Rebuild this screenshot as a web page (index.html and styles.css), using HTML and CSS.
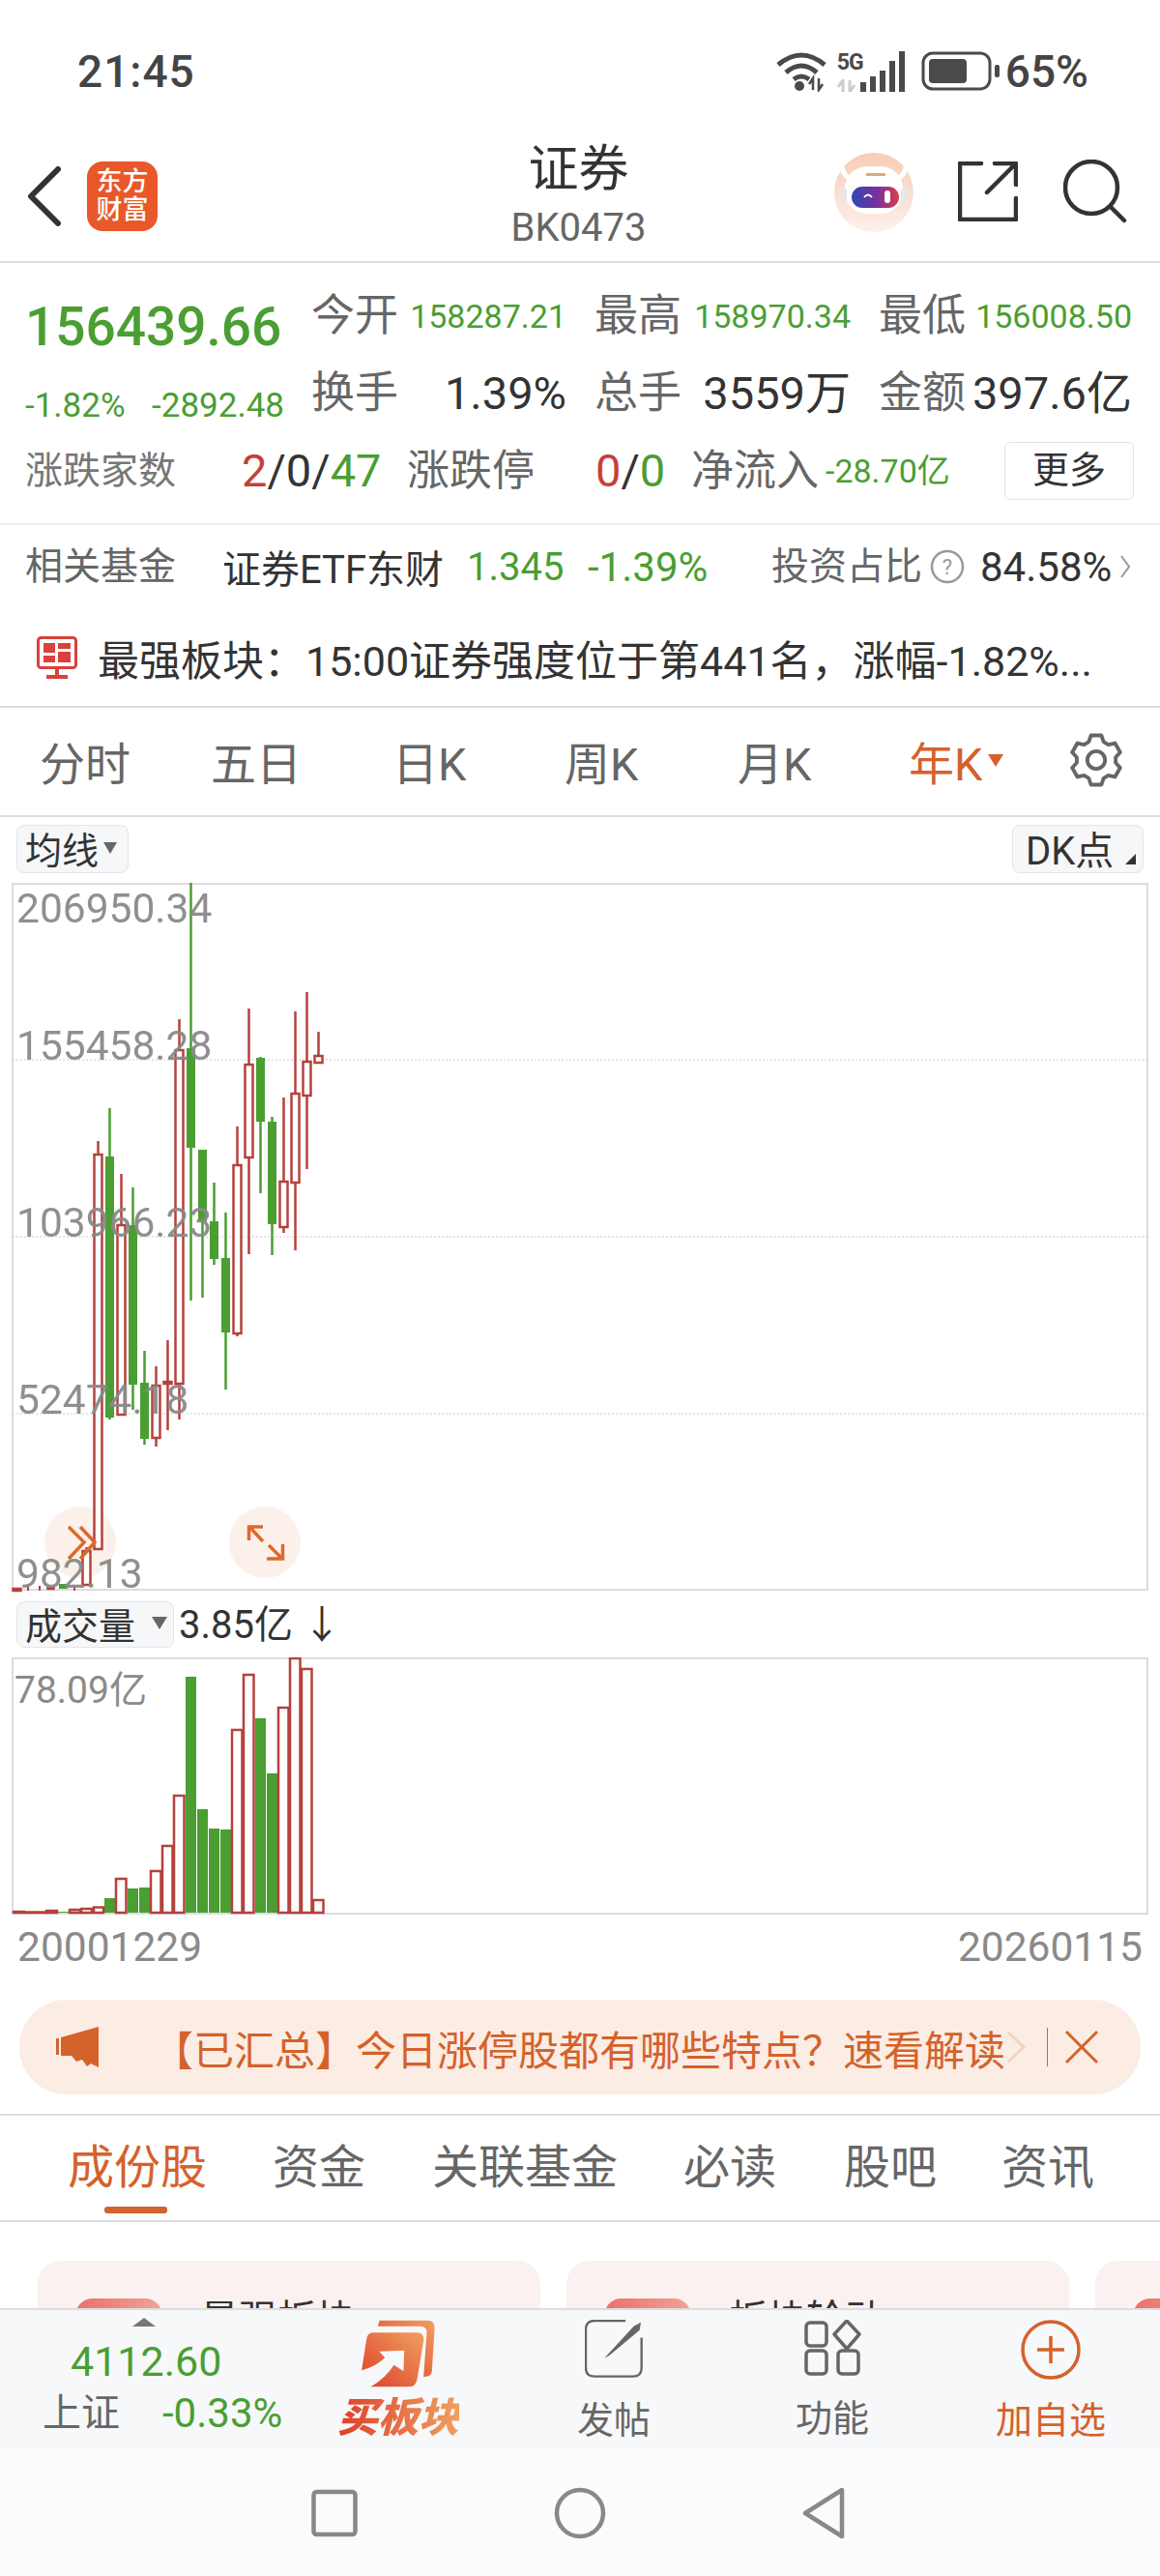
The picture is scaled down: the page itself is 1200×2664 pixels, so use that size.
FILE: index.html
```html
<!DOCTYPE html>
<html>
<head>
<meta charset="utf-8"/>
<title>证券 BK0473</title>
<link rel="stylesheet" href="styles.css">
</head>
<body>
<div class="status">
  <span class="clock">21:45</span>
  <div class="status-right">
    <svg class="wifi" width="52" height="42" viewBox="0 0 52 42"><path d="M2 14Q26 -6 50 14M10 22Q26 8 42 22M18 29Q26 23 34 29" fill="none" stroke="#4a4a4a" stroke-width="5"/><circle cx="24" cy="36" r="5" fill="#4a4a4a"/><path d="M38 40V28l-4 6M44 28V40l4-6" fill="none" stroke="#4a4a4a" stroke-width="2.5"/></svg>
    <div class="net"><span class="net-5g">5G</span><svg width="24" height="13" viewBox="0 0 24 13"><path d="M6 13V1l-5 7M13 1V13l5-7" fill="none" stroke="#ccc" stroke-width="3"/></svg></div>
    <svg class="bars" width="46" height="42" viewBox="0 0 46 42"><path d="M3 42V32M13 42V26M23 42V20M33 42V10M43 42V0" stroke="#4a4a4a" stroke-width="6" fill="none"/></svg>
    <svg class="batt" width="82" height="42" viewBox="0 0 82 42"><rect x="2" y="2" width="69" height="37" rx="10" fill="none" stroke="#4a4a4a" stroke-width="3"/><rect x="8" y="8" width="39" height="25" rx="4" fill="#4a4a4a"/><rect x="76" y="14" width="5" height="13" rx="2" fill="#4a4a4a"/></svg>
    <span class="pct">65%</span>
  </div>
</div>

<div class="topbar">
  <div class="top-left">
    <svg width="36" height="62" viewBox="0 0 36 62"><path d="M32 3L4 31l28 28" fill="none" stroke="#333" stroke-width="6" stroke-linecap="round" stroke-linejoin="round"/></svg>
    <div class="logo"><span>东方</span><span>财富</span></div>
  </div>
  <div class="title">
    <div class="title-name">证券</div>
    <div class="title-code">BK0473</div>
  </div>
  <div class="top-right">
    <svg width="82" height="82" viewBox="0 0 82 82">
      <defs>
        <linearGradient id="peach" x1="0" y1="0" x2="0" y2="1"><stop offset="0" stop-color="#f6cdb4"/><stop offset="1" stop-color="#fdf1ec"/></linearGradient>
        <linearGradient id="visor" x1="0" y1="0" x2="1" y2="0"><stop offset="0" stop-color="#2f49b8"/><stop offset=".55" stop-color="#7a2f9c"/><stop offset="1" stop-color="#d8404a"/></linearGradient>
      </defs>
      <circle cx="41" cy="41" r="41" fill="url(#peach)"/>
      <path d="M8 15q2 10 10 12M74 15q-2 10-10 12" stroke="#fff" stroke-width="5" fill="none"/>
      <rect x="11" y="14" width="60" height="49" rx="23" fill="#fff"/>
      <rect x="5" y="36" width="8" height="16" rx="4" fill="#e9e7e6"/>
      <rect x="69" y="36" width="8" height="16" rx="4" fill="#e9e7e6"/>
      <rect x="33" y="21" width="20" height="3" fill="#e2a677"/>
      <rect x="18" y="35" width="49" height="22" rx="11" fill="url(#visor)"/>
      <path d="M31 46q4-5 8 0" stroke="#fff" stroke-width="2" fill="none"/>
      <rect x="52" y="39" width="6" height="13" rx="3" fill="#fff"/>
    </svg>
    <svg width="62" height="62" viewBox="0 0 62 62"><path d="M24 2H2V60H60V38M60 2L30 32M38 2H60V24" fill="none" stroke="#333" stroke-width="4.5" stroke-linecap="round" stroke-linejoin="round"/></svg>
    <svg width="66" height="66" viewBox="0 0 66 66"><circle cx="29" cy="29" r="27" fill="none" stroke="#333" stroke-width="4.5"/><path d="M49 49L63 63" stroke="#333" stroke-width="4.5" stroke-linecap="round"/></svg>
  </div>
</div>

<div class="quote">
  <div class="quote-grid">
    <div class="price">156439.66</div>
    <div class="stat"><span class="lbl">今开</span><span class="num green">158287.21</span></div>
    <div class="stat"><span class="lbl">最高</span><span class="num green">158970.34</span></div>
    <div class="stat"><span class="lbl">最低</span><span class="num green">156008.50</span></div>
    <div class="change"><span>-1.82%</span><span>-2892.48</span></div>
    <div class="stat"><span class="lbl">换手</span><span class="val">1.39%</span></div>
    <div class="stat"><span class="lbl">总手</span><span class="val">3559万</span></div>
    <div class="stat"><span class="lbl">金额</span><span class="val">397.6亿</span></div>
  </div>
  <div class="breadth">
    <span class="lbl-sm">涨跌家数</span>
    <span class="val"><span class="red">2</span>/0/<span class="green">47</span></span>
    <span class="lbl">涨跌停</span>
    <span class="val"><span class="red">0</span>/<span class="green">0</span></span>
    <span class="lbl">净流入</span>
    <span class="num green">-28.70亿</span>
    <span class="more">更多</span>
  </div>
</div>

<div class="fund">
  <span class="lbl-sm">相关基金</span>
  <span class="fund-name">证券ETF东财</span>
  <span class="fund-num green">1.345</span>
  <span class="fund-num green">-1.39%</span>
  <span class="lbl-sm">投资占比</span>
  <svg width="36" height="36" viewBox="0 0 36 36"><circle cx="18" cy="18" r="16" fill="none" stroke="#999" stroke-width="2.5"/><text x="18" y="26" font-size="22" text-anchor="middle" fill="#999">?</text></svg>
  <span class="fund-pct">84.58%</span>
  <svg width="12" height="26" viewBox="0 0 12 26"><path d="M2 2l8 11-8 11" fill="none" stroke="#999" stroke-width="2"/></svg>
</div>

<div class="notice">
  <svg width="42" height="44" viewBox="0 0 42 44"><rect x="1.5" y="1.5" width="39" height="31" rx="3" fill="none" stroke="#d9413b" stroke-width="3"/><path d="M7 7h12v10H7zM22 7h13v6H22zM7 20h12v7H7zM22 16h13v11H22z" fill="#d9413b"/><path d="M21 33v7M10 42h22" stroke="#d9413b" stroke-width="4"/></svg>
  <span>最强板块：15:00证券强度位于第441名，涨幅-1.82%...</span>
</div>

<div class="ktabs">
  <span>分时</span>
  <span>五日</span>
  <span>日K</span>
  <span>周K</span>
  <span>月K</span>
  <span class="ktab-on">年K<i class="caret-on"></i></span>
  <svg width="56" height="58" viewBox="-29 -30 58 60"><path d="M-5.6 -26.4L5.6 -26.4L7.9 -19.5L12.9 -16.5L20.1 -18.1L25.7 -8.3L20.8 -2.9L20.8 2.9L25.7 8.3L20.1 18.1L12.9 16.5L7.9 19.5L5.6 26.4L-5.6 26.4L-7.9 19.5L-12.9 16.5L-20.1 18.1L-25.7 8.3L-20.8 2.9L-20.8 -2.9L-25.7 -8.3L-20.1 -18.1L-12.9 -16.5L-7.9 -19.5Z" fill="none" stroke="#666" stroke-width="4" stroke-linejoin="round"/><circle r="9.5" fill="none" stroke="#666" stroke-width="4"/></svg>
</div>

<div class="tools">
  <span class="pill pill-ma">均线<i class="caret"></i></span>
  <span class="pill pill-dk">DK点<i class="corner"></i></span>
</div>

<svg class="kchart" width="1200" height="732" viewBox="0 913 1200 732">
  <path class="frame" d="M13 1644V914H1187V1644H13"/>
  <path class="dots" d="M13 1096H1187M13 1279H1187M13 1462H1187"/>
  <circle class="bubble" cx="83" cy="1595" r="37"/>
  <circle class="bubble" cx="274" cy="1595" r="37"/>
  <path class="wick-g" d="M113.500 1146V1468M137.500 1228V1458M149.500 1397V1494M197.500 913V1345M209.500 1189V1342M221.500 1223V1308M233.500 1254V1437M269.500 1093V1234M281.500 1155V1298"/>
  <path class="wick-r" d="M101.500 1180V1602M125.500 1214V1463M161.500 1413V1496M173.500 1386V1479M185.500 1054V1468M245.500 1165V1382M257.500 1043V1297M293.500 1135V1275M305.500 1046V1293M317.500 1026V1209M329.500 1067V1099M89.500 1600V1639"/>
  <g class="body-g">
    <rect x="109" y="1196" width="9" height="270"/>
    <rect x="133" y="1267" width="9" height="165"/>
    <rect x="145" y="1430" width="9" height="58"/>
    <rect x="193" y="1084" width="9" height="103"/>
    <rect x="205" y="1189" width="9" height="74"/>
    <rect x="217" y="1263" width="9" height="39"/>
    <rect x="229" y="1301" width="9" height="77"/>
    <rect x="265" y="1094" width="9" height="66"/>
    <rect x="277" y="1160" width="9" height="106"/>
    <rect x="61" y="1638" width="9" height="5"/>
  </g>
  <g class="body-r">
    <rect x="97.500" y="1194" width="8" height="408"/>
    <rect x="121.500" y="1267" width="8" height="196"/>
    <rect x="157.500" y="1433" width="8" height="54"/>
    <rect x="169.500" y="1429" width="8" height="2"/>
    <rect x="181.500" y="1086" width="8" height="345"/>
    <rect x="241.500" y="1205" width="8" height="174"/>
    <rect x="253.500" y="1101" width="8" height="96"/>
    <rect x="289.500" y="1222" width="8" height="47"/>
    <rect x="301.500" y="1131" width="8" height="92"/>
    <rect x="313.500" y="1098" width="8" height="35"/>
    <rect x="325.500" y="1092" width="8" height="7"/>
    <rect x="85.500" y="1604" width="8" height="35"/>
    <rect x="13.500" y="1643" width="8" height="2"/>
    <rect x="49.500" y="1642" width="6" height="1"/>
  </g>
  <path class="tiny" d="M29 1641V1645M41 1640V1645M77 1641V1645"/>
  <path class="ctrl" d="M71 1579L87 1595 71 1612M83 1579L98 1595 83 1612"/>
  <path class="ctrl" d="M257.500 1593V1579H272M259 1580L272 1594M292.500 1597V1612H276M291 1611L278 1598"/>
  <g class="axis">
    <text x="17" y="954">206950.34</text>
    <text x="17" y="1096">155458.28</text>
    <text x="17" y="1279">103966.23</text>
    <text x="17" y="1462">52474.18</text>
    <text x="17" y="1642">982.13</text>
  </g>
</svg>

<div class="vol-tools">
  <span class="pill pill-vol">成交量<i class="caret"></i></span>
  <span class="vol-now">3.85亿 ↓</span>
</div>

<svg class="vchart" width="1200" height="266" viewBox="0 1714 1200 266">
  <path class="frame" d="M13 1979V1715H1187V1979H13"/>
  <g class="body-g">
    <rect x="108" y="1963" width="11" height="15"/>
    <rect x="132" y="1953" width="11" height="25"/>
    <rect x="144" y="1952" width="11" height="26"/>
    <rect x="192" y="1734" width="11" height="244"/>
    <rect x="204" y="1871" width="11" height="107"/>
    <rect x="216" y="1891" width="11" height="87"/>
    <rect x="228" y="1892" width="11" height="86"/>
    <rect x="264" y="1777" width="11" height="201"/>
    <rect x="276" y="1834" width="11" height="144"/>
    <rect x="60" y="1977" width="11" height="1"/>
  </g>
  <g class="body-r">
    <rect x="120" y="1943" width="10.500" height="35"/>
    <rect x="156" y="1935" width="10.500" height="43"/>
    <rect x="168" y="1909" width="10.500" height="69"/>
    <rect x="180" y="1857" width="10.500" height="121"/>
    <rect x="240" y="1789" width="10.500" height="189"/>
    <rect x="252" y="1732" width="10.500" height="246"/>
    <rect x="288" y="1766" width="10.500" height="212"/>
    <rect x="300" y="1715" width="10.500" height="263"/>
    <rect x="312" y="1726" width="10.500" height="252"/>
    <rect x="324" y="1965" width="10.500" height="13"/>
    <rect x="97" y="1972.500" width="10" height="5.500"/>
    <rect x="84" y="1974" width="11" height="4"/>
    <rect x="72" y="1975" width="11" height="3"/>
    <rect x="48" y="1976" width="11" height="2"/>
    <rect x="14" y="1977" width="11" height="1"/>
    <rect x="26" y="1977.500" width="22" height="0.500"/>
  </g>
  <text class="vol-max" x="15" y="1761">78.09亿</text>
</svg>

<div class="dates"><span>20001229</span><span>20260115</span></div>

<div class="banner">
  <svg width="52" height="42" viewBox="0 0 52 42"><path d="M6 12h3v17H6zM11 11L50 0V42L42 38 38 41 33 34 27 36 22 30H11z" fill="#d4622b"/></svg>
  <span class="banner-text">【已汇总】今日涨停股都有哪些特点？速看解读</span>
  <svg class="banner-more" width="22" height="38" viewBox="0 0 22 38"><path d="M2 4l16 15L2 34" fill="none" stroke="#f2d3c1" stroke-width="3"/></svg>
  <i class="banner-bar"></i>
  <svg width="36" height="36" viewBox="0 0 36 36"><path d="M2 2l32 32M34 2L2 34" stroke="#d4622b" stroke-width="3" fill="none"/></svg>
</div>

<div class="subtabs">
  <span class="subtab-on">成份股</span>
  <span>资金</span>
  <span>关联基金</span>
  <span>必读</span>
  <span>股吧</span>
  <span>资讯</span>
</div>

<div class="cards">
  <div class="card"><i class="card-icon"></i><span>最强板块</span></div>
  <div class="card"><i class="card-icon"></i><span>板块轮动</span></div>
  <div class="card"><i class="card-icon"></i></div>
</div>

<div class="footer">
  <div class="index">
    <i class="index-up"></i>
    <div class="index-val green">4112.60</div>
    <div class="index-row"><span class="index-name">上证</span><span class="index-pct green">-0.33%</span></div>
  </div>
  <div class="act act-buy">
    <svg width="77" height="70" viewBox="190 30 230 210">
      <defs>
        <linearGradient id="buy" x1="0" y1="1" x2="1" y2="0"><stop offset="0" stop-color="#dd3f2a"/><stop offset="1" stop-color="#f0a060"/></linearGradient>
      </defs>
      <path d="M245 32H395Q418 32 416 60L408 190Q406 208 382 207L392 70Q392 50 372 50H240Z" fill="url(#buy)"/>
      <path d="M225 70H365Q385 72 382 95L362 215Q358 238 335 238H218Q265 210 290 170L320 190 322 125 245 128 262 148Q235 175 190 187L205 90Q208 70 225 70Z" fill="url(#buy)"/>
    </svg>
    <span class="buy-text">买板块</span>
  </div>
  <div class="act">
    <svg width="60" height="60" viewBox="890 30 178 178"><path d="M1015 33H920Q893 33 893 60V178Q893 204 920 204H1038Q1064 204 1064 178V85" fill="none" stroke="#666" stroke-width="7"/><path d="M950 148L1040 50 1062 38 1058 62 965 140Z" fill="#666"/></svg>
    <span>发帖</span>
  </div>
  <div class="act">
    <svg width="60" height="58" viewBox="0 0 60 58"><g fill="none" stroke="#666" stroke-width="3.5"><rect x="3" y="3" width="21" height="24" rx="4"/><rect x="3" y="32" width="21" height="24" rx="4"/><rect x="36" y="32" width="21" height="24" rx="4"/><path d="M45 1L58 15 45 30 32 15Z" stroke-linejoin="round"/></g></svg>
    <span>功能</span>
  </div>
  <div class="act act-add">
    <svg width="62" height="62" viewBox="0 0 62 62"><circle cx="31" cy="31" r="29" fill="none" stroke="#d4622b" stroke-width="3.5"/><path d="M31 17V45M17 31H45" stroke="#d4622b" stroke-width="3.5"/></svg>
    <span>加自选</span>
  </div>
</div>

<div class="navbar">
  <svg width="48" height="50" viewBox="0 0 48 50"><rect x="2.500" y="3" width="43" height="44" rx="3" fill="none" stroke="#888" stroke-width="4.500"/></svg>
  <svg width="54" height="54" viewBox="0 0 54 54"><circle cx="27" cy="27" r="24" fill="none" stroke="#888" stroke-width="4.500"/></svg>
  <svg width="46" height="54" viewBox="0 0 46 54"><path d="M42 3V51L4 27Z" fill="none" stroke="#888" stroke-width="4.500" stroke-linejoin="round"/></svg>
</div>
</body>
</html>
```

FILE: styles.css
```css
* {
  box-sizing: border-box;
}

html, body {
  margin: 0;
  padding: 0;
}

body {
  width: 1200px;
  height: 2664px;
  overflow: hidden;
  background: #fff;
  font-family: Roboto, "Noto Sans CJK SC", sans-serif;
  color: #333;
}

svg {
  display: block;
  flex: none;
}

.green { color: #4a9e32; }
.red { color: #c63f38; }

/* status bar */
.status {
  height: 148px;
  padding: 50px 74px 0 80px;
  display: flex;
  justify-content: space-between;
  align-items: flex-start;
  color: #444;
}

.clock {
  font-size: 46px;
  line-height: 48px;
  font-weight: 500;
  letter-spacing: 1px;
}

.status-right {
  display: flex;
  align-items: center;
  height: 48px;
}

.wifi { margin-right: 11px; }
.bars { margin-left: -4px; margin-right: 17px; }
.batt { margin-right: 5px; }

.net {
  width: 28px;
  height: 42px;
  display: flex;
  flex-direction: column;
  justify-content: space-between;
  overflow: visible;
}

.net-5g {
  font-size: 23px;
  line-height: 24px;
  font-weight: 700;
  letter-spacing: -1px;
  color: #4a4a4a;
}

.pct {
  font-size: 46px;
  line-height: 48px;
  font-weight: 500;
}

/* title bar */
.topbar {
  height: 124px;
  display: grid;
  grid-template-columns: 1fr 200px 1fr;
  border-bottom: 2px solid #ddd;
}

.top-left {
  display: flex;
  align-items: center;
  padding: 0 0 12px 28px;
  gap: 26px;
}

.logo {
  width: 73px;
  height: 72px;
  border-radius: 16px;
  background: #e9582a;
  color: #fff;
  font-size: 27px;
  line-height: 29px;
  text-align: center;
  padding-top: 7px;
  display: flex;
  flex-direction: column;
  font-weight: 500;
}

.title {
  text-align: center;
  padding-right: 3px;
}

.title-name {
  font-size: 52px;
  line-height: 56px;
  color: #333;
}

.title-code {
  font-size: 40px;
  line-height: 40px;
  margin-top: 12px;
  color: #666;
}

.top-right {
  display: flex;
  align-items: center;
  justify-content: flex-end;
  padding: 0 34px 22px 0;
  gap: 0;
}

.top-right svg:first-child { margin-right: 46px; margin-bottom: -2px; }
.top-right svg:last-child { margin-left: 47px; }

/* quote block */
.quote {
  height: 271px;
  padding-top: 15px;
  border-bottom: 2px solid #eee;
}

.quote-grid {
  display: grid;
  grid-template-columns: 322px 293px 294px 291px;
  grid-auto-rows: 80px;
}

.price {
  padding-left: 26px;
  font-size: 55px;
  line-height: 80px;
  font-weight: 500;
  color: #4a9e32;
  position: relative;
  top: 11px;
}

.change {
  padding: 0 28px 0 26px;
  display: flex;
  justify-content: space-between;
  font-size: 35px;
  line-height: 106px;
  color: #4a9e32;
}

.stat {
  display: flex;
  justify-content: space-between;
  align-items: center;
  padding-right: 29px;
}

.lbl {
  font-size: 44px;
  line-height: 56px;
  color: #666;
}

.stat .lbl { font-size: 45px; }

.lbl-sm {
  font-size: 39px;
  line-height: 50px;
  color: #777;
}

.num {
  font-size: 34px;
  line-height: 50px;
}

.val {
  font-size: 47px;
  line-height: 56px;
  color: #333;
  white-space: nowrap;
}

.breadth {
  height: 80px;
  padding-left: 26px;
  display: grid;
  grid-template-columns: 224px 171px 195px 99px 139px 185px 134px;
  align-items: center;
}

.more {
  height: 60px;
  border: 1px solid #e2e2e2;
  border-radius: 6px;
  font-size: 38px;
  line-height: 56px;
  text-align: center;
  color: #333;
}

/* related fund */
.fund {
  height: 86px;
  padding-left: 26px;
  display: flex;
  align-items: center;
}

.fund .lbl-sm:first-child { width: 204px; color: #666; }
.fund .lbl-sm:nth-child(5) { width: 164px; color: #666; }

.fund-name {
  width: 253px;
  font-size: 40px;
  color: #333;
}

.fund-num {
  width: 125px;
  font-size: 40px;
}

.fund-num + .fund-num { width: 190px; font-size: 42px; }

.fund-pct {
  margin-left: 16px;
  width: 144px;
  font-size: 42px;
  color: #333;
}

/* notice */
.notice {
  height: 103px;
  padding-left: 38px;
  display: flex;
  align-items: center;
  gap: 21px;
  font-size: 43px;
  color: #333;
  border-bottom: 2px solid #ddd;
}

/* period tabs */
.ktabs {
  height: 113px;
  padding: 0 0 3px 41px;
  display: grid;
  grid-template-columns: 177px 188px 178px 179px 177px 166px 56px;
  align-items: center;
  font-size: 47px;
  color: #666;
  border-bottom: 2px solid #ddd;
}

.ktab-on {
  color: #d4622b;
  display: flex;
  align-items: center;
}

.caret-on {
  width: 0;
  height: 0;
  margin: 0 0 0 5px;
  border: 8px solid transparent;
  border-top: 13px solid #d4622b;
  border-bottom: 0;
}

/* chart */
.tools {
  height: 68px;
  padding: 8px 17px 0;
  display: flex;
  justify-content: space-between;
  align-items: flex-start;
}

.pill {
  height: 50px;
  padding-bottom: 3px;
  display: flex;
  align-items: center;
  background: #f6f7f9;
  border: 1px solid #e3e5e8;
  border-radius: 8px;
  font-size: 38px;
  color: #333;
  position: relative;
}

.pill-ma { width: 116px; padding-left: 8px; }
.pill-dk { width: 136px; padding-left: 13px; font-size: 40px; }
.pill-vol { width: 163px; height: 48px; padding-left: 8px; font-size: 38px; }

.caret {
  width: 0;
  height: 0;
  margin-left: 5px;
  border: 7px solid transparent;
  border-top: 12px solid #666;
  border-bottom: 0;
}

.pill-vol .caret { margin-left: 17px; border-width: 8px; border-top-width: 13px; border-bottom: 0; }

.corner {
  position: absolute;
  right: 7px;
  bottom: 8px;
  width: 0;
  height: 0;
  border-left: 11px solid transparent;
  border-bottom: 11px solid #333;
}

.kchart { overflow: visible; }

.frame {
  fill: none;
  stroke: #ddd;
  stroke-width: 2;
}

.dots {
  fill: none;
  stroke: #ccc;
  stroke-width: 1;
  stroke-dasharray: 2 2;
}

.bubble {
  fill: #fbeee6;
  opacity: .85;
}

.wick-g, .wick-r {
  fill: none;
  stroke-width: 2.5;
}

.wick-g { stroke: #4a9e32; }
.wick-r { stroke: #b5413c; }
.body-g { fill: #4a9e32; }

.body-r {
  fill: #fff;
  stroke: #b5413c;
  stroke-width: 2.5;
}

.tiny {
  fill: none;
  stroke: #b5413c;
  stroke-width: 2;
}

.ctrl {
  fill: none;
  stroke: #dd6a2c;
  stroke-width: 3.5;
}

.axis text {
  font-size: 42.5px;
  fill: #8a8a8a;
  opacity: .95;
}

.vol-tools {
  height: 69px;
  padding: 11px 0 0 17px;
  display: flex;
  align-items: flex-start;
  gap: 5px;
}

.vol-now {
  font-size: 40px;
  line-height: 50px;
  color: #333;
}

.vol-max {
  font-size: 39px;
  fill: #8a8a8a;
}

.dates {
  height: 88px;
  padding: 10px 18px 0;
  display: flex;
  justify-content: space-between;
  font-size: 42.5px;
  line-height: 48px;
  color: #8a8a8a;
}

/* banner */
.banner {
  height: 98px;
  margin: 0 20px;
  padding-left: 32px;
  display: flex;
  align-items: center;
  background: #fbece4;
  border-radius: 49px;
  color: #d4622b;
}

.banner-text {
  margin-left: 54px;
  width: 886px;
  font-size: 42px;
  white-space: nowrap;
}

.banner-more { margin-left: -3px; }

.banner-bar {
  width: 1px;
  height: 40px;
  margin: 0 17px 0 20px;
  background: #d4622b;
}

/* lower tabs */
.subtabs {
  height: 112px;
  margin-top: 20px;
  padding: 0 0 0 70px;
  display: grid;
  grid-template-columns: 212px 165px 260px 166px 163px auto;
  align-items: center;
  font-size: 48px;
  line-height: 60px;
  color: #666;
  border-top: 2px solid #ddd;
  border-bottom: 2px solid #ddd;
}

.subtab-on {
  color: #d4622b;
  position: relative;
}

.subtab-on::after {
  content: "";
  position: absolute;
  left: 38px;
  bottom: -17px;
  width: 65px;
  height: 7px;
  border-radius: 3px;
  background: #d4622b;
}

.cards {
  height: 49px;
  margin-top: 40px;
  padding-left: 39px;
  display: flex;
  gap: 27px;
  overflow: hidden;
}

.card {
  flex: none;
  width: 520px;
  height: 120px;
  padding: 39px 0 0 39px;
  display: flex;
  gap: 39px;
  background: #fbf1f0;
  border-radius: 24px;
  font-size: 40px;
  line-height: 44px;
  color: #333;
}

.card-icon {
  width: 90px;
  height: 60px;
  border-radius: 18px;
  background: linear-gradient(90deg, #e8716b, #efa498);
}

/* bottom bar */
.footer {
  height: 146px;
  display: grid;
  grid-template-columns: 302px 220px 226px 226px 226px;
  background: #f7f8fa;
  border-top: 2px solid #ddd;
}

.index {
  padding: 8px 0 0 44px;
}

.index-up {
  display: block;
  width: 0;
  height: 0;
  margin-left: 93px;
  border: 12px solid transparent;
  border-bottom: 9px solid #777;
  border-top: 0;
}

.index-val {
  margin: 13px 0 0 29px;
  font-size: 43px;
  line-height: 46px;
}

.index-row {
  display: flex;
  align-items: center;
  margin-top: 8px;
}

.index-name {
  width: 124px;
  font-size: 40px;
  line-height: 46px;
  color: #666;
}

.index-pct {
  font-size: 42px;
  line-height: 46px;
}

.act {
  display: flex;
  flex-direction: column;
  align-items: center;
  padding-top: 10px;
  font-size: 38px;
  line-height: 44px;
  color: #666;
}

.act span { margin-top: 22px; }

.act-buy .buy-text {
  margin-top: 10px;
  font-size: 42px;
  line-height: 44px;
  font-weight: 900;
  font-style: italic;
  background: linear-gradient(90deg, #dd3f2a, #f0a060);
  -webkit-background-clip: text;
  background-clip: text;
  color: transparent;
  white-space: nowrap;
}

.act-add {
  color: #d4622b;
}

.act-add span { margin-top: 20px; }

/* system nav */
.navbar {
  height: 131px;
  padding: 0 325px 0 322px;
  display: flex;
  justify-content: space-between;
  align-items: center;
  background: #fbfbfb;
}
```
